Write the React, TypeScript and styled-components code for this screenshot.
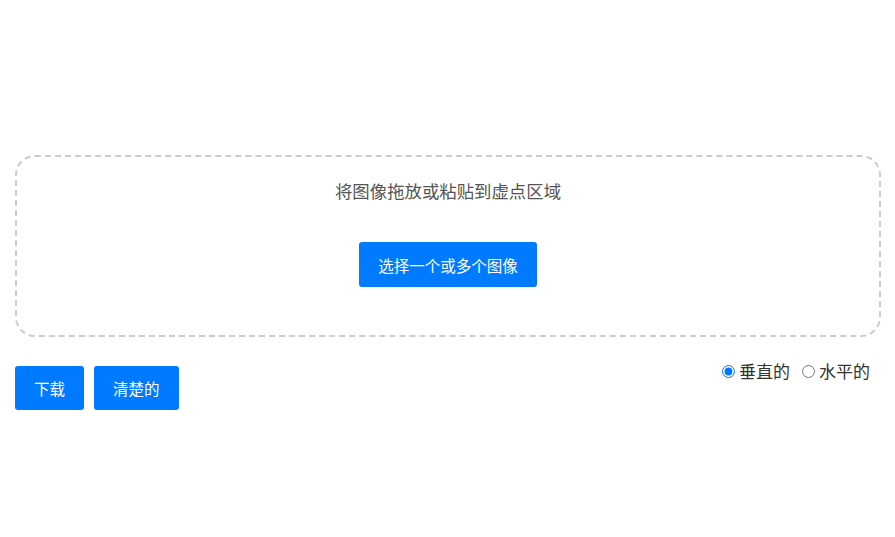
import React, { useState } from "react"
import styled, { createGlobalStyle } from "styled-components"

const GlobalStyle = createGlobalStyle`
  body {
    margin: 0;
    background: #fff;
    font-family: "Noto Sans CJK SC", "Noto Sans", sans-serif;
  }
`

const Page = styled.div`
  padding: 155px 14px 0 15px;
`

const DropZone = styled.div`
  border: 2px dashed #ccc;
  border-radius: 20px;
  padding: 22px 20px 48px;
  display: flex;
  flex-direction: column;
  align-items: center;
`

const Hint = styled.p`
  margin: 0 0 39px;
  font-size: 17.4px;
  line-height: 24px;
  color: #555;
`

const BlueButton = styled.button<{ $tall?: boolean }>`
  height: ${(p) => (p.$tall ? 45 : 44)}px;
  padding: 0 19px;
  border: none;
  border-radius: 3px;
  background: #007bff;
  color: #fff;
  font-family: inherit;
  font-size: 15.5px;
  cursor: pointer;
`

const Controls = styled.div`
  margin-top: 21px;
  padding-right: 11px;
  display: flex;
  justify-content: space-between;
  align-items: flex-start;
`

const ButtonGroup = styled.div`
  margin-top: 8px;
  display: flex;
  gap: 10px;
`

const RadioGroup = styled.div`
  display: flex;
  gap: 12px;
  font-size: 17px;
  line-height: 26px;
  color: #333;
`

const RadioLabel = styled.label`
  display: flex;
  align-items: center;
  gap: 4px;
  cursor: pointer;
`

const Radio = styled.input`
  margin: 0;
  width: 13px;
  height: 13px;
`

const App: React.FC = () => {
  const [direction, setDirection] = useState("vertical")

  return (
    <>
      <GlobalStyle />
      <Page>
        <DropZone>
          <Hint>将图像拖放或粘贴到虚点区域</Hint>
          <BlueButton $tall>选择一个或多个图像</BlueButton>
        </DropZone>
        <Controls>
          <ButtonGroup>
            <BlueButton>下载</BlueButton>
            <BlueButton>清楚的</BlueButton>
          </ButtonGroup>
          <RadioGroup>
            <RadioLabel>
              <Radio
                type="radio"
                name="direction"
                checked={direction === "vertical"}
                onChange={() => setDirection("vertical")}
              />
              垂直的
            </RadioLabel>
            <RadioLabel>
              <Radio
                type="radio"
                name="direction"
                checked={direction === "horizontal"}
                onChange={() => setDirection("horizontal")}
              />
              水平的
            </RadioLabel>
          </RadioGroup>
        </Controls>
      </Page>
    </>
  )
}

export default App
